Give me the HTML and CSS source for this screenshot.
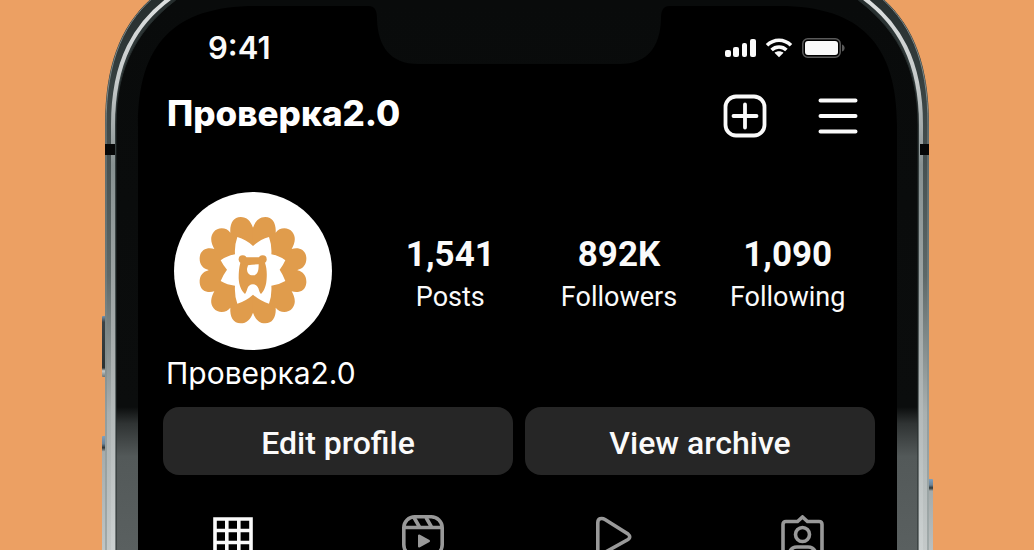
FILE: index.html
```html
<!DOCTYPE html>
<html lang="ru">
<head>
<meta charset="utf-8">
<meta name="viewport" content="width=device-width, initial-scale=1">
<title>Проверка2.0</title>
<link rel="stylesheet" href="styles.css">
</head>
<body>
<main class="phone">
  <svg class="frame" viewBox="97 0 840 560" aria-hidden="true">
    <defs>
      <linearGradient id="metal" gradientUnits="userSpaceOnUse" x1="0" y1="0" x2="0" y2="550">
        <stop offset="0" stop-color="#262e2e"/><stop offset=".2" stop-color="#3c4646"/>
        <stop offset=".5" stop-color="#5d6868"/><stop offset=".75" stop-color="#a9b0b0"/><stop offset="1" stop-color="#c4c9c9"/>
      </linearGradient>
      <linearGradient id="shine" gradientUnits="userSpaceOnUse" x1="0" y1="0" x2="0" y2="550">
        <stop offset="0" stop-color="#dcdfdf"/><stop offset=".15" stop-color="#c6caca"/>
        <stop offset=".3" stop-color="#879191"/><stop offset=".6" stop-color="#a5abab"/><stop offset="1" stop-color="#ccd1d1"/>
      </linearGradient>
      <linearGradient id="bezel" gradientUnits="userSpaceOnUse" x1="0" y1="0" x2="0" y2="550">
        <stop offset="0" stop-color="#090b0b"/><stop offset=".74" stop-color="#0b0d0d"/>
        <stop offset=".77" stop-color="#2f3333"/><stop offset=".83" stop-color="#535959"/><stop offset="1" stop-color="#5a6060"/>
      </linearGradient>
      <linearGradient id="key" x1="0" y1="0" x2="0" y2="1">
        <stop offset="0" stop-color="#7392ae"/><stop offset=".1" stop-color="#3b4346"/>
        <stop offset=".85" stop-color="#2c3131"/><stop offset=".9" stop-color="#c3c8c8"/><stop offset="1" stop-color="#6d7575"/>
      </linearGradient>
      <linearGradient id="rail" x1="0" y1="0" x2="0" y2="1">
        <stop offset="0" stop-color="#7f9fbd"/><stop offset=".06" stop-color="#6c8498"/>
        <stop offset=".09" stop-color="#303737"/><stop offset=".12" stop-color="#a5abab"/><stop offset="1" stop-color="#c4c9c9"/>
      </linearGradient>
    </defs>
    <rect x="102" y="316" width="4" height="61" rx="1" fill="url(#key)"/>
    <rect x="102" y="436" width="4" height="130" rx="1" fill="url(#rail)"/>
    <rect x="928" y="479" width="5" height="100" rx="1" fill="url(#rail)"/>
    <path d="M105 560V125C105 60 123 20 159-8H875C911 20 929 60 929 125V560Z" fill="url(#metal)"/>
    <path d="M106 560V125C106 60 124 20 160-8M928 560V125C928 60 910 20 874-8" fill="none" stroke="#7d8989" stroke-width="1"/>
    <path d="M113 560V125C113 63 134 22 176-6M921 560V125C921 63 900 22 858-6" fill="none" stroke="url(#shine)" stroke-width="4"/>
    <path d="M116 560V125C116 66 138 26 184-6H850C896 26 918 66 918 125V560Z" fill="url(#bezel)" stroke="#252c2c" stroke-width="1"/>
    <path d="M105 144H115V155H105ZM920 144H929V155H920Z" fill="#060707"/>
    <path d="M138 560V126C138 45 173 6 256 6H368C376 6 377 12 377 20C378 46 390 64 418 64H620C648 64 660 46 661 20C661 12 662 6 670 6H779C861 6 897 45 897 126V560Z" fill="#000"/>
  </svg>

  <div class="screen">
    <div class="status">
      <time class="clock">9:41</time>
      <div class="signals">
        <svg width="31" height="20" viewBox="0 0 31 20" fill="#fafafa" role="img" aria-label="Signal"><rect y="12" width="6" height="7" rx="2"/><rect x="8" y="9" width="6" height="10" rx="2"/><rect x="17" y="5" width="5" height="14" rx="2"/><rect x="25" y="1" width="6" height="18" rx="2"/></svg>
        <svg width="28" height="20" viewBox="0 0 28 20" role="img" aria-label="Wi-Fi"><path d="M2 7.300C9 .600 19 .600 26 7.300M6.600 12C10.800 8 17.200 8 21.400 12" fill="none" stroke="#fafafa" stroke-width="3.600"/><path d="M9.500 14.800C12 12.800 16 12.800 18.500 14.800L14 19.300Z" fill="#fafafa"/></svg>
        <svg width="43" height="20" viewBox="0 0 43 20" role="img" aria-label="Battery"><rect x=".8" y=".8" width="37.400" height="18.400" rx="5" fill="none" stroke="#5a5a5a" stroke-width="1.500"/><rect x="3" y="3" width="33" height="14" rx="3" fill="#fafafa"/><path d="M40 6.500C43.500 7.500 43.500 12.500 40 13.500Z" fill="#5a5a5a"/></svg>
      </div>
    </div>

    <header class="header">
      <h1 class="title">Проверка2.0</h1>
      <div class="actions">
        <button class="icon-button" type="button" aria-label="New post">
          <svg width="44" height="44" viewBox="0 0 44 44" fill="none" stroke="#fafafa" stroke-linecap="round"><rect x="2.500" y="2.500" width="39" height="39" rx="10.500" stroke-width="3.800"/><path d="M22 10.500V33.500M10.500 22H33.500" stroke-width="3.800"/></svg>
        </button>
        <button class="icon-button" type="button" aria-label="Menu">
          <svg width="40" height="44" viewBox="0 0 40 44" fill="none" stroke="#fafafa" stroke-width="4" stroke-linecap="round"><path d="M2.500 6.500H37.500M2.500 22H37.500M2.500 37.500H37.500"/></svg>
        </button>
      </div>
    </header>

    <section class="profile">
      <svg class="avatar" viewBox="28 35 474 474" role="img" aria-label="Проверка2.0">
        <defs>
          <path id="petals" d="M267 142H265C258 122 246 110 228 110C206 110 195 130 197 157C186 141 160 139 147 155C135 170 139 188 149 206C130 200 107 206 105 232C104 252 114 265 132 269V271H267Z"/>
        </defs>
        <circle cx="265" cy="272" r="237" fill="#fff"/>
        <g fill="#e09c4c">
          <use href="#petals"/>
          <use href="#petals" transform="matrix(-1 0 0 1 530 0)"/>
          <use href="#petals" transform="matrix(1 0 0 -1 0 539)"/>
          <use href="#petals" transform="matrix(-1 0 0 -1 530 539)"/>
        </g>
        <path fill="#fff" d="M218 170Q244 177 265 197Q287 177 313 170Q322 195 320 222Q343 226 362 240Q355 256 345 268Q356 285 362 302Q342 314 320 316Q322 345 313 370Q287 362 265 343Q244 362 218 370Q209 345 211 316Q188 314 168 302Q175 284 187 268Q176 256 168 240Q188 226 211 222Q209 195 218 170Z"/>
        <g fill="#e09c4c"><circle cx="234" cy="237" r="12"/><circle cx="294" cy="237" r="12"/>
        <path d="M234 231H294L301 247C306 262 307 276 306 294C305 315 300 330 289 341C281 333 284 312 265 312C246 312 249 333 241 341C229 330 223 315 222 294C222 276 223 262 227 247Z"/></g>
        <path fill="#fff" d="M250 255Q265 252 282 252C282 272 279 285 265 285C252 285 247 276 247 265Z"/>
      </svg>
      <dl class="stats">
        <div class="stat"><dt class="stat-label">Posts</dt><dd class="stat-value">1,541</dd></div>
        <div class="stat"><dt class="stat-label">Followers</dt><dd class="stat-value">892K</dd></div>
        <div class="stat"><dt class="stat-label">Following</dt><dd class="stat-value">1,090</dd></div>
      </dl>
    </section>

    <p class="name">Проверка2.0</p>

    <div class="buttons">
      <button class="button" type="button">Edit profile</button>
      <button class="button" type="button">View archive</button>
    </div>

    <nav class="tabs" aria-label="Profile content">
      <button class="icon-button" type="button" aria-label="Grid">
        <svg width="44" height="44" viewBox="0 0 44 44" fill="none" stroke="#fafafa" stroke-width="3.600"><path d="M4 4H40V40H4ZM15.800 4V40M27.800 4V40M4 15.500H40M4 27.500H40"/></svg>
      </button>
      <button class="icon-button" type="button" aria-label="Reels">
        <svg width="44" height="44" viewBox="0 0 44 44" fill="none" stroke="#999" stroke-width="3.600"><rect x="2.800" y="1.800" width="38.400" height="39" rx="11"/><path d="M3 12.500H41M13 2.500L18.500 12M25 2.500L30.500 12"/><path d="M18 20.500V31.500L28 26Z" fill="#999" stroke-width="2" stroke-linejoin="round"/></svg>
      </button>
      <button class="icon-button" type="button" aria-label="Videos">
        <svg width="44" height="44" viewBox="0 0 44 44" fill="none" stroke="#999" stroke-width="3.600"><path d="M10 3.800Q7.800 4.500 7.800 8V36Q7.800 41 12 39L38 24.500Q41.500 22 38 19L15 4.500Q12.500 3 10 3.800Z"/></svg>
      </button>
      <button class="icon-button" type="button" aria-label="Tagged">
        <svg width="44" height="44" viewBox="0 0 44 44" fill="none" stroke="#999" stroke-width="3.600"><path d="M6 6.500H17.500L22.500 2L27.500 6.500H39Q42 6.500 42 9.500V43H3V9.500Q3 6.500 6 6.500Z"/><circle cx="22.500" cy="19.500" r="7"/><path d="M9 40Q10 32 17 32H28Q35 32 36 40"/></svg>
      </button>
    </nav>
  </div>
</main>
</body>
</html>
```
FILE: styles.css
```css
* {
  box-sizing: border-box;
}

body {
  margin: 0;
  height: 100vh;
  overflow: hidden;
  background: #eca063;
  color: #fafafa;
  font-family: Inter, "Liberation Sans", sans-serif;
}

.phone {
  position: relative;
  max-width: 840px;
  min-height: 100vh;
  margin: 0 auto;
  padding: 0 40px 0 41px;
}

.frame {
  position: absolute;
  top: 0;
  left: 0;
  width: 100%;
}

.screen {
  position: relative;
  padding-top: 30px;
}

.status {
  display: flex;
  align-items: center;
  justify-content: space-between;
  padding: 0 52px 0 70px;
}

.clock {
  font-size: 31px;
  line-height: 36px;
  font-weight: 600;
}

.signals {
  display: flex;
  gap: 9px;
}

.header {
  display: flex;
  align-items: flex-start;
  justify-content: space-between;
  margin-top: 28px;
  padding: 0 39px 0 29px;
}

.title {
  margin: 0;
  color: #fff;
  font-size: 35px;
  line-height: 38px;
  font-weight: 800;
}

.actions {
  display: flex;
  gap: 51px;
}

.icon-button {
  display: flex;
  justify-content: center;
  padding: 0;
  border: 0;
  background: none;
}

.profile {
  display: flex;
  align-items: center;
  gap: 34px;
  margin-top: 54px;
  padding: 0 25px 0 36px;
}

.avatar {
  flex: none;
  width: 158px;
  height: 158px;
}

.stats {
  display: grid;
  flex: 1;
  grid-template-columns: repeat(3, 1fr);
  margin: 0;
  padding-top: 10px;
  font-family: Roboto, sans-serif;
  line-height: 42px;
  text-align: center;
}

.stat {
  display: flex;
  flex-direction: column-reverse;
}

.stat-value {
  margin: 0;
  font-size: 35px;
  font-weight: 700;
}

.stat-label {
  font-size: 27px;
}

.name {
  margin: 5px 0 0;
  padding: 0 28px;
  color: #fff;
  font-size: 30px;
  line-height: 36px;
  font-weight: 400;
}

.buttons {
  display: grid;
  grid-template-columns: 1fr 1fr;
  gap: 12px;
  margin-top: 16px;
  padding: 0 22px 0 25px;
}

.button {
  padding: 18px 16px 14px;
  border: 0;
  border-radius: 16px;
  background: #262626;
  color: #fafafa;
  font-family: Roboto, sans-serif;
  font-size: 32px;
  line-height: 36px;
  font-weight: 500;
}

.tabs {
  display: grid;
  grid-template-columns: repeat(4, 1fr);
  margin-top: 40px;
}
```
